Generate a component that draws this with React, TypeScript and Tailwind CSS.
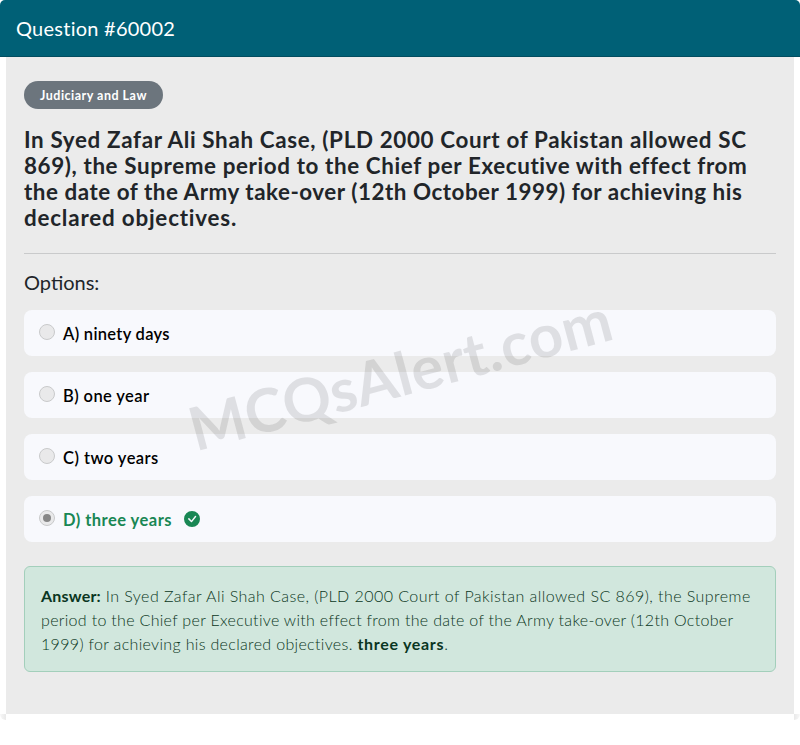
import { BsCheckCircleFill } from "react-icons/bs";

const questionLines = [
  { text: "In Syed Zafar Ali Shah Case, (PLD 2000 Court of Pakistan allowed SC", className: "tracking-[0.65px]" },
  { text: "869), the Supreme period to the Chief per Executive with effect from", className: "tracking-[0.61px]" },
  { text: "the date of the Army take-over (12th October 1999) for achieving his", className: "tracking-[0.53px]" },
  { text: "declared objectives.", className: "tracking-[0.8px]" },
];

const options = [
  { id: "A", label: "ninety days", className: "tracking-[0.3px]" },
  { id: "B", label: "one year", className: "tracking-[0.4px]" },
  { id: "C", label: "two years", className: "tracking-[0.45px]" },
  { id: "D", label: "three years", className: "tracking-[0.47px]", correct: true },
];

function Radio({ checked }: { checked?: boolean }) {
  return (
    <span className="mt-[-2px] flex h-4 w-4 items-center justify-center rounded-full border border-[#c9cacb] bg-[#e9e9ea]">
      {checked && <span className="h-2 w-2 rounded-full bg-[#868686]" />}
    </span>
  );
}

export default function App() {
  return (
    <div className="relative h-[745px] w-[800px] overflow-hidden bg-white font-['Lato',sans-serif] text-[#212529]">
      <header className="flex h-[57px] items-center rounded-t-[5px] border-b border-[#024d60] bg-[#006076] px-4">
        <h1 className="whitespace-nowrap text-[20px] leading-6 tracking-[0.25px] text-white">Question #60002</h1>
      </header>

      <main className="mx-1.5 h-[657px] bg-[#ebebeb] px-[18px] pt-6">
        <div className="flex h-7 w-[139px] items-center justify-center whitespace-nowrap rounded-full bg-[#6c757d] pt-[3px] text-[12.5px] font-bold tracking-[0.5px] text-white">
          Judiciary and Law
        </div>

        <h2 className="mt-[18px] whitespace-nowrap text-[22.4px] font-bold leading-[26px]">
          {questionLines.map((line) => (
            <div key={line.text} className="h-[26px]">
              <span className={line.className}>{line.text}</span>
            </div>
          ))}
        </h2>

        <hr className="mt-[22px] border-[#c9cacb]" />

        <h3 className="mt-4 text-[20px] leading-6">Options:</h3>

        <div className="mt-4 flex flex-col gap-4">
          {options.map((option) => (
            <div key={option.id} className="flex h-[46px] items-center rounded-lg bg-[#f8f9fd] pl-[15px]">
              <Radio checked={option.correct} />
              <span
                className={`ml-2 whitespace-nowrap pt-0.5 text-[16.5px] leading-6 ${
                  option.correct ? "font-bold text-[#198754]" : "font-semibold text-black"
                }`}
              >
                <span className={option.className}>
                  {option.id}) {option.label}
                </span>
              </span>
              {option.correct && <BsCheckCircleFill className="ml-3 h-4 w-4 text-[#198754]" />}
            </div>
          ))}
        </div>

        <div className="mt-6 h-[106px] whitespace-nowrap rounded-md border border-[#a3cfbb] bg-[#d1e7dd] px-4 pt-[17px] text-[16px] font-light leading-6 text-[#0a3622]">
          <div className="tracking-[0.45px]">
            <strong className="font-bold tracking-[0.2px]">Answer:</strong> In Syed Zafar Ali Shah Case, (PLD 2000 Court
            of Pakistan allowed SC 869), the Supreme
          </div>
          <div className="tracking-[0.31px]">
            period to the Chief per Executive with effect from the date of the Army take-over (12th October
          </div>
          <div className="tracking-[0.33px]">
            1999) for achieving his declared objectives.{" "}
            <strong className="font-bold tracking-[0.7px]">three years</strong>.
          </div>
        </div>
      </main>

      <div className="flex justify-between">
        <span className="h-1.5 w-1.5 rounded-bl-full bg-linear-to-l from-[#e9e9e9] to-[#f8f8f8]" />
        <span className="h-1.5 w-1.5 rounded-br-full bg-linear-to-r from-[#e9e9e9] to-[#f8f8f8]" />
      </div>

      <div className="pointer-events-none absolute left-[400px] top-[373px] -translate-x-1/2 -translate-y-1/2 -rotate-15 whitespace-nowrap text-[60px] font-bold leading-[72px] tracking-[0.4px] text-black/10">
        MCQsAlert.com
      </div>
    </div>
  );
}
